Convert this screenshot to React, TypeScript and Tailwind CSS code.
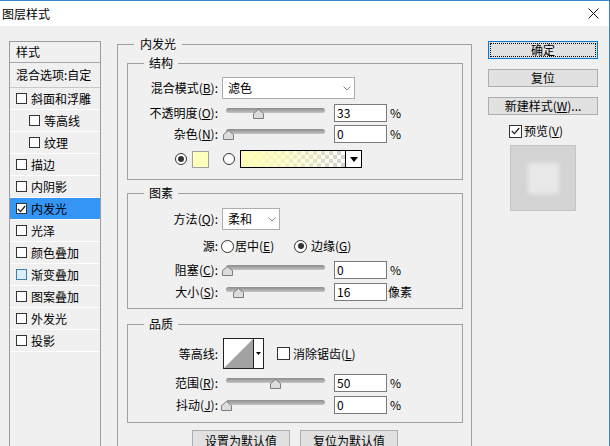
import React from 'react';

const FONT = "font-['Noto_Sans_CJK_SC','Microsoft_YaHei',sans-serif]";

const Key = ({ text, k, after = '' }: { text: string; k: string; after?: string }) => (
  <>
    {text}(<span className="underline">{k}</span>){after}
  </>
);

const Box = ({ checked, hover, className = '' }: { checked?: boolean; hover?: boolean; className?: string }) => (
  <span
    className={`shrink-0 flex items-center justify-center border ${
      hover ? 'border-[#3c7fb1] bg-[#dcedfc]' : 'border-[#333] bg-white'
    } ${className}`}
  >
    {checked && (
      <svg width="9" height="8" viewBox="0 0 9 8">
        <polyline points="0.8,4 3.5,6.6 8.2,1" fill="none" stroke="#222" strokeWidth="1.3" />
      </svg>
    )}
  </span>
);

const Radio = ({ on, className = '' }: { on?: boolean; className?: string }) => (
  <span className={`shrink-0 flex items-center justify-center rounded-full border border-[#333] bg-white ${className}`}>
    {on && <span className="w-[6px] h-[6px] rounded-full bg-[#333]" />}
  </span>
);

const Chevron = () => (
  <svg width="8" height="5" viewBox="0 0 8 5">
    <polyline points="0.5,0.5 4,4 7.5,0.5" fill="none" stroke="#888" />
  </svg>
);

const Select = ({ value, className = '' }: { value: string; className?: string }) => (
  <div className={`h-[22px] ml-[4px] bg-white border border-[#adadad] flex items-center justify-between pl-[5px] pr-[3px] ${className}`}>
    <span>{value}</span>
    <Chevron />
  </div>
);

const Label = ({ children }: { children: React.ReactNode }) => (
  <span className="w-[90px] shrink-0 text-right whitespace-nowrap">{children}</span>
);

const Slider = ({ thumb }: { thumb: string }) => (
  <div className="relative w-[99px] h-[18px] ml-[8px] shrink-0">
    <div className="mt-[4px] h-[5px] rounded-full bg-[linear-gradient(#8c8c8c,#c4c4c4)]" />
    <svg className={`absolute top-[5px] ${thumb}`} width="11" height="10" viewBox="0 0 11 10">
      <polygon points="0.5,9.5 0.5,4.5 5.5,0.5 10.5,4.5 10.5,9.5" fill="#dcdcdc" stroke="#7d7d7d" />
    </svg>
  </div>
);

const NumBox = ({ value }: { value: string }) => (
  <div className="w-[53px] h-[18px] ml-[9px] shrink-0 bg-white border border-[#7a7a7a] pl-[2px] flex items-center">
    {value}
  </div>
);

const SliderRow = ({
  label,
  thumb,
  value,
  unit,
  className,
}: {
  label: React.ReactNode;
  thumb: string;
  value: string;
  unit: React.ReactNode;
  className: string;
}) => (
  <div className={`h-[18px] flex items-center ${className}`}>
    <Label>{label}</Label>
    <Slider thumb={thumb} />
    <NumBox value={value} />
    {unit}
  </div>
);

const Group = ({ title, className, children }: { title: string; className: string; children: React.ReactNode }) => (
  <div className={`relative border border-[#a0a0a0] ${className}`}>
    <span className="absolute left-[16px] top-[-9px] px-[5px] bg-[#f0f0f0] leading-[16px]">{title}</span>
    {children}
  </div>
);

const styles = [
  { t: '斜面和浮雕' },
  { t: '等高线', indent: true },
  { t: '纹理', indent: true },
  { t: '描边' },
  { t: '内阴影' },
  { t: '内发光', active: true },
  { t: '光泽' },
  { t: '颜色叠加' },
  { t: '渐变叠加', hover: true },
  { t: '图案叠加' },
  { t: '外发光' },
  { t: '投影' },
];

const App: React.FC = () => {
  return (
    <div
      className={`w-[610px] h-[446px] overflow-hidden flex flex-col bg-[#f0f0f0] border-t border-r border-[#3a83c8] text-[12px] leading-[16px] text-black ${FONT}`}
    >
      {/* title bar */}
      <div className="h-[25px] shrink-0 bg-white flex items-center justify-between pl-[2px] pr-[10px]">
        <span>图层样式</span>
        <svg width="11" height="11" viewBox="0 0 11 11">
          <path d="M0.5 0.5 L10.5 10.5 M10.5 0.5 L0.5 10.5" stroke="#111" strokeWidth="1" />
        </svg>
      </div>

      <div className="flex items-start">
        {/* style list */}
        <div className="ml-[9px] mt-[15px] w-[92px] h-[420px] shrink-0 border border-[#9a9a9a]">
          <div className="h-[21px] border-b border-[#a8a8a8] pl-[6px] flex items-center">样式</div>
          <div className="h-[25px] border-b border-[#c8c8c8] pl-[6px] flex items-center whitespace-nowrap">混合选项:自定</div>
          {styles.map((s) => (
            <div
              key={s.t}
              className={`h-[22px] border-b border-white flex items-center ${s.indent ? 'pl-[19px]' : 'pl-[6px]'} ${
                s.active ? 'bg-[#3596f6]' : ''
              }`}
            >
              <Box className="w-[11px] h-[11px]" checked={s.active} hover={s.hover} />
              <span className="ml-[4px] whitespace-nowrap">{s.t}</span>
            </div>
          ))}
        </div>

        {/* inner glow settings */}
        <div className="ml-[16px] mt-[18px] w-[355px] h-[420px] shrink-0 relative border border-[#a0a0a0] pl-[9px] pr-[8px]">
          <span className="absolute left-[16px] top-[-9px] px-[6px] bg-[#f0f0f0] leading-[16px]">内发光</span>

          <Group title="结构" className="mt-[18px] pb-[11px]">
            <div className="mt-[13px] h-[22px] flex items-center">
              <Label>
                <Key text="混合模式" k="B" after=":" />
              </Label>
              <Select value="滤色" className="w-[133px]" />
            </div>
            <SliderRow
              className="mt-[5px]"
              label={<Key text="不透明度" k="O" after=":" />}
              thumb="left-[27px]"
              value="33"
              unit={<span className="ml-[3px]">%</span>}
            />
            <SliderRow
              className="mt-[3px]"
              label={<Key text="杂色" k="N" after=":" />}
              thumb="left-[-3px]"
              value="0"
              unit={<span className="ml-[3px]">%</span>}
            />
            <div className="mt-[7px] h-[18px] flex items-center">
              <Radio on className="ml-[47px] w-[12px] h-[12px]" />
              <span className="ml-[5px] w-[17px] h-[17px] bg-[#ffffbe] border border-[#a0a0a0]" />
              <Radio className="ml-[14px] w-[12px] h-[12px]" />
              <div className="ml-[5px] w-[122px] h-[18px] border border-black flex bg-white">
                <svg width="104" height="16" viewBox="0 0 104 16">
                  <defs>
                    <pattern id="chk" width="8" height="8" patternUnits="userSpaceOnUse">
                      <rect width="8" height="8" fill="#fff" />
                      <rect width="4" height="4" fill="#d2d2d2" />
                      <rect x="4" y="4" width="4" height="4" fill="#d2d2d2" />
                    </pattern>
                    <linearGradient id="fade" x1="0" x2="1" y1="0" y2="0">
                      <stop offset="0" stopColor="#ffffb8" />
                      <stop offset="0.35" stopColor="#ffffb8" stopOpacity="0.75" />
                      <stop offset="1" stopColor="#ffffb8" stopOpacity="0" />
                    </linearGradient>
                  </defs>
                  <rect width="104" height="16" fill="url(#chk)" />
                  <rect width="104" height="16" fill="url(#fade)" />
                </svg>
                <div className="flex-1 border-l border-black flex items-center justify-center">
                  <svg width="8" height="5" viewBox="0 0 8 5">
                    <polygon points="0,0 8,0 4,5" fill="#000" />
                  </svg>
                </div>
              </div>
            </div>
          </Group>

          <Group title="图素" className="mt-[13px] pb-[7px]">
            <div className="mt-[14px] h-[22px] flex items-center">
              <Label>
                <Key text="方法" k="Q" after=":" />
              </Label>
              <Select value="柔和" className="w-[58px]" />
            </div>
            <div className="mt-[8px] h-[16px] flex items-center">
              <Label>源:</Label>
              <div className="ml-[3px] w-[73px] flex items-center">
                <Radio className="w-[13px] h-[13px]" />
                <span className="ml-[1px] whitespace-nowrap">
                  <Key text="居中" k="E" />
                </span>
              </div>
              <Radio on className="w-[13px] h-[13px]" />
              <span className="ml-[4px] whitespace-nowrap">
                <Key text="边缘" k="G" />
              </span>
            </div>
            <SliderRow
              className="mt-[7px]"
              label={<Key text="阻塞" k="C" after=":" />}
              thumb="left-[-4px]"
              value="0"
              unit={<span className="ml-[3px]">%</span>}
            />
            <SliderRow
              className="mt-[4px]"
              label={<Key text="大小" k="S" after=":" />}
              thumb="left-[7px]"
              value="16"
              unit={<span className="ml-[1px]">像素</span>}
            />
          </Group>

          <Group title="品质" className="mt-[15px] pb-[8px]">
            <div className="mt-[13px] h-[31px] flex items-center">
              <Label>等高线:</Label>
              <div className="ml-[5px] w-[41px] h-[31px] border border-[#222] bg-white flex shrink-0">
                <svg width="29" height="29" viewBox="0 0 29 29">
                  <polygon points="0,29 29,0 29,29" fill="#a3a3a3" />
                </svg>
                <div className="flex-1 border-l border-[#222] flex items-center justify-center">
                  <svg width="5" height="3" viewBox="0 0 5 3">
                    <polygon points="0,0 5,0 2.5,3" fill="#000" />
                  </svg>
                </div>
              </div>
              <Box className="ml-[13px] w-[13px] h-[13px]" />
              <span className="ml-[3px] whitespace-nowrap">
                <Key text="消除锯齿" k="L" />
              </span>
            </div>
            <SliderRow
              className="mt-[5px]"
              label={<Key text="范围" k="R" after=":" />}
              thumb="left-[44px]"
              value="50"
              unit={<span className="ml-[3px]">%</span>}
            />
            <SliderRow
              className="mt-[4px]"
              label={<Key text="抖动" k="J" after=":" />}
              thumb="left-[-5px]"
              value="0"
              unit={<span className="ml-[3px]">%</span>}
            />
          </Group>

          <div className="mt-[7px] flex justify-center gap-[10px]">
            <button className="w-[98px] h-[22px] border border-[#adadad] bg-[#e1e1e1] flex items-center justify-center">
              设置为默认值
            </button>
            <button className="w-[98px] h-[22px] border border-[#adadad] bg-[#e1e1e1] flex items-center justify-center">
              复位为默认值
            </button>
          </div>
        </div>

        {/* buttons + preview */}
        <div className="ml-[16px] mt-[15px] w-[110px] shrink-0 flex flex-col">
          <button className="h-[18px] border border-[#0078d7] bg-[#e1e1e1] p-[1px]">
            <div className="h-full border border-dotted border-black flex items-center justify-center">确定</div>
          </button>
          <button className="mt-[10px] h-[18px] border border-[#adadad] bg-[#e1e1e1] flex items-center justify-center">
            复位
          </button>
          <button className="mt-[10px] h-[18px] border border-[#adadad] bg-[#e1e1e1] flex items-center justify-center whitespace-nowrap">
            <Key text="新建样式" k="W" after="..." />
          </button>
          <div className="mt-[9px] h-[14px] pl-[21px] flex items-center">
            <Box checked className="w-[13px] h-[13px]" />
            <span className="ml-[2px] whitespace-nowrap">
              <Key text="预览" k="V" />
            </span>
          </div>
          <div className="mt-[7px] ml-[22px] w-[66px] h-[66px] bg-[#d4d4d4] border border-[#c4c4c4] flex items-center justify-center">
            <div className="w-[31px] h-[31px] bg-[#e8e8e8] blur-[2px]" />
          </div>
        </div>
      </div>
    </div>
  );
};

export default App;
